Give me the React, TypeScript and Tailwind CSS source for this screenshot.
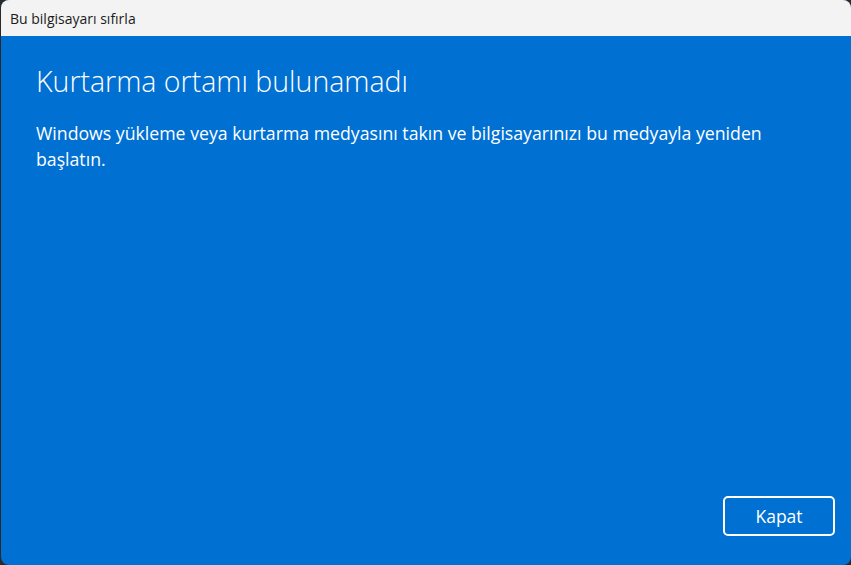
export default function App() {
  return (
    <div className="w-[851px] h-[565px] bg-[#2a2a2a] pl-px" style={{ fontFamily: '"Open Sans", "Noto Sans", sans-serif' }}>
      <div className="h-full w-full rounded-[8px] overflow-hidden flex flex-col bg-[#0070d3]">
        <div className="h-[36px] bg-[#f3f3f3] flex items-center pl-[9px] text-[14px] text-[#1b1b1b] shrink-0">
          Bu bilgisayarı sıfırla
        </div>
        <div className="flex-1 flex flex-col pl-[35px] pr-[16px] pt-[26px] pb-[29px] text-white">
          <h1 className="text-[28.5px] font-light leading-[38px]">Kurtarma ortamı bulunamadı</h1>
          <p className="mt-[20px] text-[17.7px] leading-[26px] max-w-[780px]">
            Windows yükleme veya kurtarma medyasını takın ve bilgisayarınızı bu medyayla yeniden başlatın.
          </p>
          <div className="mt-auto flex justify-end">
            <button className="w-[112px] h-[40px] border-2 border-white rounded-[5px] text-[17.5px] text-white bg-transparent">
              Kapat
            </button>
          </div>
        </div>
      </div>
    </div>
  );
}
